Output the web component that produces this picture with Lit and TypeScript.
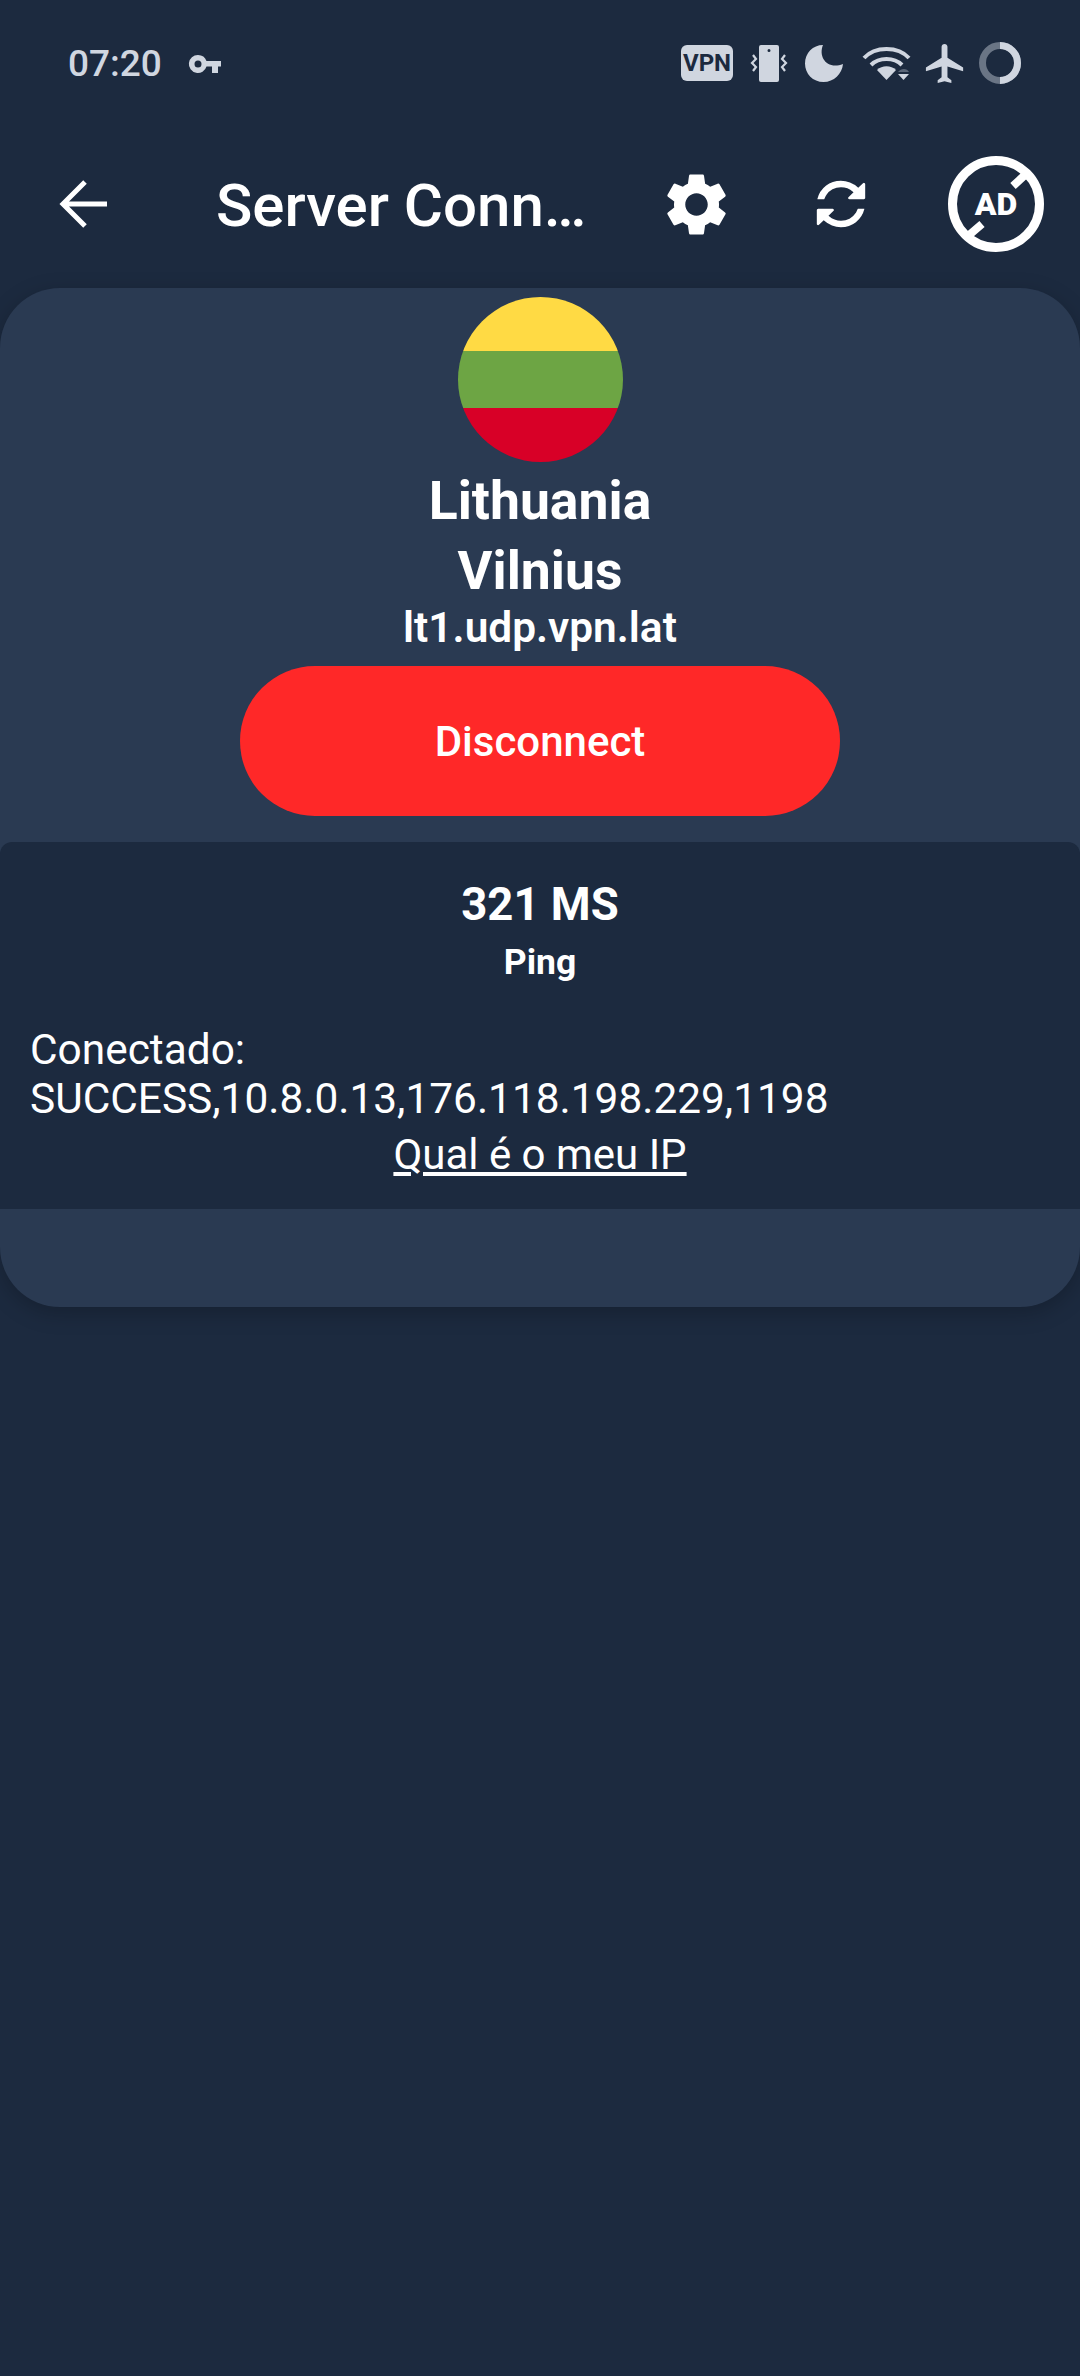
import { LitElement, html, css } from 'lit';
import { customElement } from 'lit/decorators.js';

@customElement('app-root')
export class AppRoot extends LitElement {
  static styles = css`
    :host {
      display: block;
      width: 1080px;
      height: 2376px;
      background: #1c2a3f;
      color: #fff;
      font-family: Roboto, 'Liberation Sans', sans-serif;
      overflow: hidden;
    }

    svg {
      display: block;
      flex: none;
      overflow: visible;
    }

    .status {
      display: flex;
      align-items: center;
      height: 126px;
      padding: 0 59px 0 68px;
      box-sizing: border-box;
      color: #d0d6e0;
    }

    .time {
      font-size: 37px;
      font-weight: 500;
    }

    .key {
      margin-left: 27px;
      margin-top: 2px;
    }

    .status-icons {
      display: flex;
      align-items: center;
      margin-left: auto;
    }

    .vpn {
      width: 52px;
      height: 36px;
      border-radius: 6px;
      background: #d0d6e0;
      color: #1c2a3f;
      font-size: 24px;
      font-weight: 700;
      line-height: 36px;
      text-align: center;
    }

    .vibrate {
      margin-left: 17px;
    }

    .moon {
      margin-left: 17px;
    }

    .wifi {
      margin-left: 19px;
    }

    .plane {
      margin-left: 9px;
    }

    .ring {
      margin-left: 10px;
    }

    .toolbar {
      display: flex;
      align-items: center;
      height: 156px;
      padding: 0 36px 0 59px;
      box-sizing: border-box;
    }

    .title {
      margin-left: 109px;
      margin-top: 2px;
      font-size: 60px;
      font-weight: 500;
      white-space: nowrap;
    }

    .actions {
      display: flex;
      align-items: center;
      gap: 82px;
      margin-left: auto;
    }

    .card {
      display: flex;
      flex-direction: column;
      align-items: center;
      margin-top: 6px;
      padding: 9px 0 98px;
      background: #2a3a52;
      border-radius: 60px;
      box-shadow: 0 6px 22px rgba(0, 0, 0, 0.22);
    }

    .country {
      margin-top: 4px;
      font-size: 53.5px;
      font-weight: 700;
      line-height: 70px;
      text-align: center;
    }

    .host {
      font-size: 42.4px;
      font-weight: 600;
      line-height: 44px;
    }

    .disconnect {
      width: 600px;
      height: 150px;
      margin-top: 16px;
      padding-top: 2px;
      border: none;
      border-radius: 75px;
      background: #ff2828;
      color: #fff;
      font-family: inherit;
      font-size: 42px;
      font-weight: 500;
    }

    .panel {
      display: flex;
      flex-direction: column;
      align-self: stretch;
      margin-top: 26px;
      padding: 37px 30px 30px;
      background: #1c2a3f;
      border-radius: 12px 12px 0 0;
    }

    .ping-value {
      font-size: 45.5px;
      font-weight: 700;
      line-height: 52px;
      text-align: center;
    }

    .ping-label {
      margin-top: 11px;
      font-size: 35.5px;
      font-weight: 700;
      line-height: 40px;
      text-align: center;
    }

    .log {
      margin-top: 43px;
      font-size: 42.4px;
      line-height: 49px;
    }

    .my-ip {
      margin-top: 7px;
      color: #fff;
      font-size: 42px;
      line-height: 49px;
      text-align: center;
      text-decoration: underline;
    }
  `;

  render() {
    return html`
      <div class="status">
        <span class="time">07:20</span>
        <svg class="key" width="32" height="18" viewBox="0 0 32 18" fill="#d0d6e0">
          <path fill-rule="evenodd" d="M9 0a9 9 0 0 1 8.500 6H32v5.500h-3V18h-6v-6.500h-5.500A9 9 0 1 1 9 0zm0 5.500a3.500 3.500 0 1 0 0 7 3.500 3.500 0 0 0 0-7z"/>
        </svg>
        <div class="status-icons">
          <div class="vpn">VPN</div>
          <svg class="vibrate" width="38" height="37" viewBox="0 0 38 37" fill="none">
            <path fill="#d0d6e0" fill-rule="evenodd" d="M11 0h16a2 2 0 0 1 2 2v33a2 2 0 0 1-2 2H11a2 2 0 0 1-2-2V2a2 2 0 0 1 2-2zm8 4a1.500 1.500 0 1 0 0 3 1.500 1.500 0 0 0 0-3z"/>
            <path stroke="#d0d6e0" stroke-width="2.200" d="M3 10l3 4-4 4 4 4-3 4M35 10l-3 4 4 4-4 4 3 4"/>
          </svg>
          <svg class="moon" width="38" height="37" viewBox="0 0 38 37" fill="#d0d6e0">
            <path d="M18 0C13 12 22 25 38 19 37 29 29 37 18.500 37 8 37 0 29 0 18.500 0 8 8 0 18 0z"/>
          </svg>
          <svg class="wifi" width="51" height="36" viewBox="0 0 51 36" fill="none">
            <path stroke="#d0d6e0" stroke-width="4" d="M2 13C13 1 36 1 47 13M9 20c8-8 23-8 31 0"/>
            <path fill="#d0d6e0" d="M24.500 35L15 25c5-5 14-5 19 0z"/>
            <path fill="#5a6678" d="M36 27c3-4 9-4 11 0z"/>
            <path fill="#d0d6e0" d="M36 29h11l-5.500 6z"/>
          </svg>
          <svg class="plane" width="47" height="47" viewBox="0 0 24 24" fill="#d0d6e0">
            <path d="M21 16v-2l-8-5V3.500c0-.83-.67-1.500-1.500-1.500S10 2.670 10 3.500V9l-8 5v2l8-2.500V19l-2 1.500V22l3.500-1 3.500 1v-1.500L13 19v-5.500l8 2.500z"/>
          </svg>
          <svg class="ring" width="42" height="42" viewBox="0 0 42 42" fill="none">
            <circle cx="21" cy="21" r="17.500" stroke="#6a7585" stroke-width="7"/>
            <path stroke="#d0d6e0" stroke-width="7" d="M21 3.500a17.500 17.500 0 0 1 0 35"/>
          </svg>
        </div>
      </div>

      <div class="toolbar">
        <svg width="48" height="48" viewBox="0 0 48 48" fill="none" stroke="#fff" stroke-width="5">
          <path d="M48 24H5M26 2L4 24l22 22"/>
        </svg>
        <span class="title">Server Conn…</span>
        <div class="actions">
          <svg width="75" height="75" viewBox="0 0 24 24" fill="#fff">
            <path d="M19.140 12.940c.04-.3.06-.61.06-.94 0-.32-.02-.64-.07-.94l2.030-1.580c.18-.14.23-.41.12-.61l-1.920-3.320c-.12-.22-.37-.29-.59-.22l-2.390.96c-.5-.38-1.030-.7-1.620-.94l-.36-2.540c-.04-.24-.24-.41-.48-.41h-3.840c-.24 0-.43.17-.47.41l-.36 2.540c-.59.24-1.130.57-1.620.94l-2.390-.96c-.22-.08-.47 0-.59.22L2.740 8.870c-.12.21-.08.47.12.61l2.030 1.580c-.05.3-.09.63-.09.94s.02.64.07.94l-2.030 1.580c-.18.14-.23.41-.12.61l1.920 3.320c.12.22.37.29.59.22l2.390-.96c.5.38 1.030.7 1.620.94l.36 2.540c.05.24.24.41.48.41h3.840c.24 0 .44-.17.47-.41l.36-2.540c.59-.24 1.130-.56 1.620-.94l2.390.96c.22.08.47 0 .59-.22l1.920-3.320c.12-.22.07-.47-.12-.61l-2.010-1.580zM12 15.600c-1.980 0-3.600-1.620-3.600-3.600s1.620-3.600 3.600-3.600 3.600 1.620 3.600 3.600-1.620 3.600-3.600 3.600z"/>
          </svg>
          <svg width="50" height="48" viewBox="128 128 1536 1536" preserveAspectRatio="none" fill="#fff" stroke="#1c2a3f" stroke-width="50">
            <path d="M1639 1056q0 5-1 7-64 268-268 434.500t-478 166.500q-146 0-282.500-55t-243.500-157l-129 129q-19 19-45 19t-45-19-19-45v-448q0-26 19-45t45-19h448q26 0 45 19t19 45-19 45l-137 137q71 66 161 102t187 36q134 0 250-65t186-179q11-17 53-117 8-23 30-23h192q13 0 22.500 9.500t9.500 22.500zm25-800v448q0 26-19 45t-45 19h-448q-26 0-45-19t-19-45 19-45l138-138q-148-137-349-137-134 0-250 65t-186 179q-11 17-53 117-8 23-30 23h-199q-13 0-22.500-9.500t-9.500-22.500v-7q65-268 270-434.500t480-166.500q146 0 284 55.500t245 156.500l130-129q19-19 45-19t45 19 19 45z"/>
          </svg>
          <svg width="96" height="96" viewBox="0 0 96 96" fill="none" stroke="#fff">
            <circle cx="48" cy="48" r="43.500" stroke-width="9"/>
            <path stroke-width="8" d="M65 30l13-12M34 68L20 80"/>
            <text x="48" y="59" fill="#fff" stroke="none" font-family="Roboto, sans-serif" font-size="32" font-weight="900" text-anchor="middle">AD</text>
          </svg>
        </div>
      </div>

      <div class="card">
        <svg width="165" height="165" viewBox="0 0 165 165">
          <defs>
            <clipPath id="flag-clip"><circle cx="82.500" cy="82.500" r="82.500"/></clipPath>
          </defs>
          <g clip-path="url(#flag-clip)">
            <rect width="165" height="54" fill="#ffda44"/>
            <rect y="54" width="165" height="57" fill="#6da544"/>
            <rect y="111" width="165" height="54" fill="#d80027"/>
          </g>
        </svg>
        <div class="country">Lithuania<br />Vilnius</div>
        <div class="host">lt1.udp.vpn.lat</div>
        <button class="disconnect">Disconnect</button>
        <div class="panel">
          <div class="ping-value">321 MS</div>
          <div class="ping-label">Ping</div>
          <div class="log">Conectado:<br />SUCCESS,10.8.0.13,176.118.198.229,1198</div>
          <div class="my-ip">Qual é o meu IP</div>
        </div>
      </div>
    `;
  }
}
